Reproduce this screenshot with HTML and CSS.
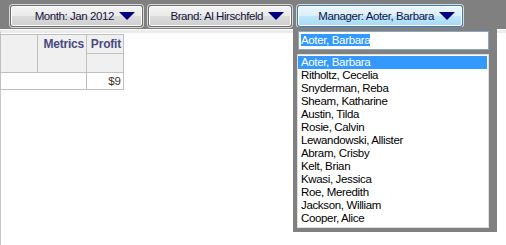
FILE: index.html
```html
<!DOCTYPE html>
<html lang="en">
<head>
    <meta charset="UTF-8">
    <title>Report Filters</title>
    <link rel="stylesheet" href="styles.css">
</head>
<body>

    <div class="toolbar">
        <button class="filter month">Month: Jan 2012 <span class="arrow"></span></button>
        <button class="filter brand">Brand: Al Hirschfeld <span class="arrow"></span></button>
        <button class="filter manager active">Manager: Aoter, Barbara <span class="arrow"></span></button>
    </div>

    <div class="content">
        <table class="grid">
            <tr>
                <th class="corner" rowspan="2"></th>
                <th class="metrics" rowspan="2">Metrics</th>
                <th class="col">Profit</th>
            </tr>
            <tr>
                <th class="col empty"></th>
            </tr>
            <tr>
                <td class="label" colspan="2"></td>
                <td class="value">$9</td>
            </tr>
        </table>
    </div>

    <!-- dropdown for the manager filter -->
    <div class="dropdown">
        <div class="search"><span class="sel">Aoter, Barbara</span></div>
        <ul class="list">
            <li class="selected">Aoter, Barbara</li>
            <li>Ritholtz, Cecelia</li>
            <li>Snyderman, Reba</li>
            <li>Sheam, Katharine</li>
            <li>Austin, Tilda</li>
            <li>Rosie, Calvin</li>
            <li>Lewandowski, Allister</li>
            <li>Abram, Crisby</li>
            <li>Kelt, Brian</li>
            <li>Kwasi, Jessica</li>
            <li>Roe, Meredith</li>
            <li>Jackson, William</li>
            <li>Cooper, Alice</li>
        </ul>
    </div>

</body>
</html>
```

FILE: styles.css
```css
body {
    margin: 0;
    font-family: "Liberation Sans", Arial, sans-serif;
    font-size: 11.5px;
    background: #fff;
}
.toolbar {
    background: #808080;
    height: 29px;
    box-sizing: border-box;
    padding: 4px 0 0 9px;
    display: flex;
    gap: 3px;
    align-items: flex-start;
}
.filter {
    height: 22px;
    box-sizing: border-box;
    border: 1px solid #6e6e6e;
    border-radius: 3px;
    box-shadow: 0 0 0 1px #d8d8d8, inset 0 0 0 1px #fcfcfc;
    background: linear-gradient(#f4f4f4, #ebebeb 50%, #dcdcdc 51%, #cfcfcf);
    font-family: "Liberation Sans", Arial, sans-serif;
    font-size: 11.5px;
    letter-spacing: -0.42px;
    color: #14143c;
    display: flex;
    align-items: center;
    justify-content: flex-end;
    padding: 0 7px 0 0;
    gap: 5px;
    margin: 1px 1px 0 1px;
}
.month { width: 133px; }
.brand { width: 144px; }
.manager { width: 166px; }
.filter.active {
    border-color: #3c7fb1;
    background: linear-gradient(#eaf6fd, #d9f0fc 50%, #bee6fd 51%, #a7d9f5);
}
.arrow {
    width: 0;
    height: 0;
    border-left: 8px solid transparent;
    border-right: 8px solid transparent;
    border-top: 8px solid #000080;
}
.content {
    border-top: 3px solid #ececec;
    border-left: 1px solid #c8c8c8;
    margin-top: 1px;
    height: 215px;
    padding-top: 1px;
}
.grid {
    border-collapse: collapse;
    margin-left: -1px;
}
.grid th, .grid td {
    border: 1px solid #c0c0c0;
    padding: 0 2px;
    height: 16px;
}
.grid th {
    background: #f0f0f0;
    color: #4a4a80;
    font-size: 12px;
    letter-spacing: -0.2px;
    text-align: right;
    vertical-align: top;
    padding-top: 2px;
}
.corner { width: 32px; }
.metrics { width: 44px; }
.col { width: 32px; height: 15px; }
.empty { height: 14px; }
.label { background: #fff; }
.value {
    text-align: right;
    color: #3a3020;
    height: 15px;
}
.dropdown {
    position: absolute;
    left: 293px;
    top: 27px;
    width: 204px;
    height: 205px;
    box-sizing: border-box;
    background: #808080;
    padding: 4px 8px 4px 4px;
}
.search {
    height: 19px;
    box-sizing: border-box;
    margin-left: 1px;
    background: #fff;
    border: 1px solid #8aa7c6;
    padding: 2px 0 0 2px;
    line-height: 13px;
    letter-spacing: -0.35px;
}
.sel {
    background: #3399ff;
    color: #fff;
}
.list {
    list-style: none;
    margin: 4px 0 0 0;
    padding: 1px 0 2px;
    background: #fff;
    border: 1px solid #e0e0e0;
    letter-spacing: -0.35px;
}
.list li {
    height: 13px;
    line-height: 13px;
    padding-left: 3px;
    color: #000;
}
.list li.selected {
    background: #3399ff;
    color: #fff;
    margin-right: 1px;
}
```
